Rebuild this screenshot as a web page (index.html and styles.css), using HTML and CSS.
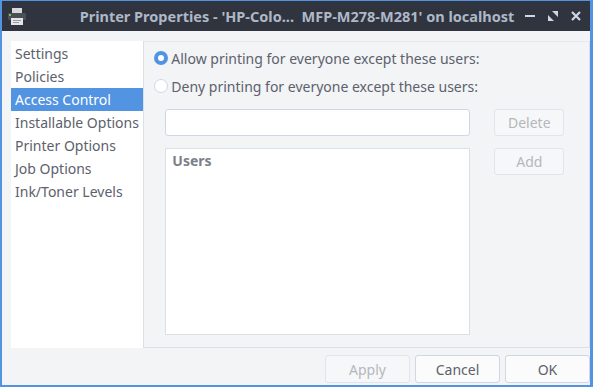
FILE: index.html
```html
<!DOCTYPE html>
<html>
<head>
<meta charset="utf-8">
<link rel="stylesheet" href="styles.css">
</head>
<body>
<div class="window">
  <div class="titlebar">
    <svg class="app-icon" width="18" height="17" viewBox="0 0 18 17">
      <rect x="4" y="0" width="10" height="5" fill="#d7d9dc"/>
      <rect x="0" y="5" width="18" height="7" rx="1" fill="#4b4f56"/>
      <rect x="1" y="6" width="2" height="2" fill="#6cc644"/>
      <rect x="3" y="10" width="12" height="7" fill="#e4e6e8"/>
      <rect x="5" y="12" width="8" height="1" fill="#9a9ea4"/>
      <rect x="5" y="14" width="6" height="1" fill="#9a9ea4"/>
    </svg>
    <div class="title">Printer Properties - 'HP-Colo...  MFP-M278-M281' on localhost</div>
    <div class="controls">
      <svg width="12" height="12" viewBox="0 0 12 12"><rect x="1" y="5" width="10" height="2" fill="#cfd6e6"/></svg>
      <svg width="12" height="12" viewBox="0 0 12 12"><path d="M5 1h6v6zM1 5l6 6H1z" fill="#cfd6e6"/></svg>
      <svg width="12" height="12" viewBox="0 0 12 12"><path d="M2 2l8 8M10 2l-8 8" stroke="#cfd6e6" stroke-width="2.2"/></svg>
    </div>
  </div>
  <div class="content">
    <div class="main">
      <ul class="nav">
        <li>Settings</li>
        <li>Policies</li>
        <li class="active">Access Control</li>
        <li>Installable Options</li>
        <li>Printer Options</li>
        <li>Job Options</li>
        <li>Ink/Toner Levels</li>
      </ul>
      <div class="panel">
        <label class="radio"><span class="dot checked"></span>Allow printing for everyone except these users:</label>
        <label class="radio"><span class="dot"></span>Deny printing for everyone except these users:</label>
        <div class="users-area">
          <div class="left-col">
            <div class="entry"></div>
            <div class="users">
              <div class="users-head">Users</div>
            </div>
          </div>
          <div class="right-col">
            <button class="btn small" disabled>Delete</button>
            <button class="btn small" disabled>Add</button>
          </div>
        </div>
      </div>
    </div>
    <div class="footer">
      <button class="btn big" disabled>Apply</button>
      <button class="btn big">Cancel</button>
      <button class="btn big">OK</button>
    </div>
  </div>
</div>
</body>
</html>
```

FILE: styles.css
```css
html, body {
  margin: 0;
  padding: 0;
}
body {
  width: 593px;
  height: 387px;
  font-family: "Noto Sans", "DejaVu Sans", sans-serif;
  font-size: 14px;
  color: #5c616c;
}
.window {
  box-sizing: border-box;
  width: 593px;
  height: 387px;
  border: 2px solid #5294e2;
  border-top-width: 1px;
  border-right-width: 3px;
  background: #f3f4f6;
  display: flex;
  flex-direction: column;
}
.titlebar {
  height: 30px;
  background: #2f343f;
  display: flex;
  align-items: center;
  padding: 0 8px 0 6px;
  flex: none;
}
.app-icon {
  flex: none;
  margin-top: 1px;
}
.title {
  flex: 1;
  text-align: center;
  font-family: "Noto Sans", sans-serif;
  font-weight: bold;
  color: #afb8c6;
  font-size: 14.5px;
  white-space: pre;
  padding-left: 44px;
}
.controls {
  display: flex;
  gap: 11px;
  align-items: center;
}
.controls svg {
  display: block;
}
.content {
  flex: 1;
  display: flex;
  flex-direction: column;
  padding: 10px 0 0 9px;
}
.main {
  display: flex;
  height: 307px;
}
.nav {
  list-style: none;
  margin: 0;
  padding: 0;
  width: 133px;
  background: #ffffff;
  border-right: 1px solid #dcdfe3;
  padding-top: 1px;
}
.nav li {
  height: 23px;
  line-height: 23px;
  padding-left: 4px;
  white-space: nowrap;
}
.nav li.active {
  background: #5294e2;
  color: #ffffff;
}
.panel {
  width: 437px;
  border-right: 1px solid #dcdfe3;
  border-bottom: 1px solid #dcdfe3;
  border-top: 1px solid #e6e8eb;
  padding: 4px 0 0 10px;
  display: flex;
  flex-direction: column;
}
.radio {
  display: flex;
  align-items: center;
  height: 24px;
  margin-bottom: 4px;
  white-space: nowrap;
}
.dot {
  box-sizing: border-box;
  width: 14px;
  height: 14px;
  border-radius: 50%;
  border: 1px solid #cfd6e6;
  background: #fff;
  margin-right: 3px;
  flex: none;
}
.dot.checked {
  border: 4px solid #5294e2;
  background: #fff;
}
.users-area {
  display: flex;
  padding-left: 11px;
  margin-top: 7px;
}
.left-col {
  width: 305px;
  display: flex;
  flex-direction: column;
  gap: 12px;
}
.entry {
  height: 25px;
  background: #fff;
  border: 1px solid #cfd6e6;
  border-radius: 3px;
}
.users {
  height: 185px;
  background: #fff;
  border: 1px solid #dcdfe3;
}
.users-head {
  font-weight: bold;
  color: #7c8088;
  padding: 2px 0 0 6px;
}
.right-col {
  margin-left: 24px;
  display: flex;
  flex-direction: column;
  gap: 12px;
}
.btn {
  font-family: inherit;
  font-size: 14px;
  color: #5c616c;
  background: #fbfbfc;
  border: 1px solid #cfd6e6;
  border-radius: 3px;
  padding: 0;
  margin: 0;
}
.btn:disabled {
  color: #b4b7bc;
  background: #f6f7f9;
  border-color: #e1e4ea;
}
.btn.small {
  width: 70px;
  height: 27px;
}
.footer {
  display: flex;
  justify-content: flex-end;
  gap: 5px;
  padding: 7px 0 0 0;
}
.btn.big {
  width: 85px;
  height: 28px;
}
```
